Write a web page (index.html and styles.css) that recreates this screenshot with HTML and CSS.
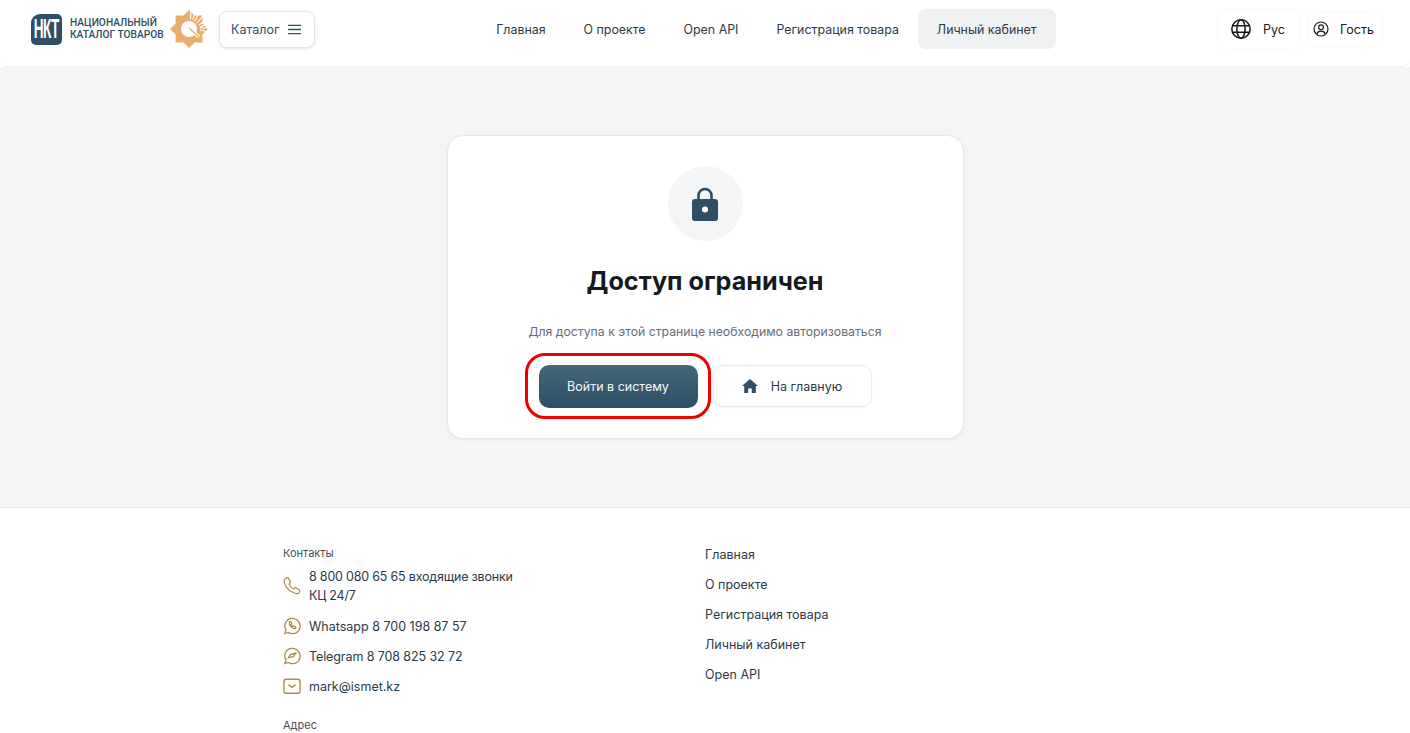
FILE: index.html
```html
<!DOCTYPE html>
<html lang="ru">
<head>
    <meta charset="UTF-8">
    <meta name="viewport" content="width=device-width, initial-scale=1.0">
    <title>Национальный каталог товаров</title>
    <link rel="stylesheet" href="styles.css">
</head>
<body>
    <header class="site-header">
        <div class="header-left">
            <a href="#" class="logo">
                <span class="logo-mark"><span class="logo-letters">НКТ</span></span>
                <span class="logo-text">НАЦИОНАЛЬНЫЙ<br>КАТАЛОГ ТОВАРОВ</span>
                <svg class="logo-star" viewBox="0 0 38 38" width="38" height="38">
                    <path fill="#e8ae6c" d="M18 0l5.500 5.600h7.900v7.900L37 19l-5.600 5.500v7.900h-7.900L18 38l-5.500-5.600H4.600v-7.900L-1 19l5.600-5.500V5.600h7.900z"/>
                    <g stroke="#fff" stroke-width="1.100">
                        <path d="M20 0l-.5 9M24 1l-2 9M28 3l-4 8M32 6l-6 7M35 10l-7 5M37 14l-8 3M38 18h-9M38 22l-9-2"/>
                    </g>
                    <circle cx="18" cy="19" r="8" fill="#fff"/>
                    <path fill="none" stroke="#fff" stroke-width="3.500" d="M19 19l9 8"/>
                    <path fill="none" stroke="#e8ae6c" stroke-width="1.300" d="M18 18l10 9"/>
                </svg>
            </a>
            <button class="catalog-btn">Каталог
                <svg viewBox="0 0 16 12" width="15" height="11"><path fill="none" stroke="#2f4f66" stroke-width="1.500" d="M1 1.500h14M1 6h14M1 10.500h14"/></svg>
            </button>
        </div>
        <nav class="main-nav">
            <a href="#">Главная</a>
            <a href="#">О проекте</a>
            <a href="#">Open API</a>
            <a href="#">Регистрация товара</a>
            <a href="#" class="active">Личный кабинет</a>
        </nav>
        <div class="header-right">
            <a href="#" class="chip chip-lang">
                <svg viewBox="0 0 24 24" width="22" height="22" fill="none" stroke="#1a1a1a" stroke-width="1.700"><circle cx="12" cy="12" r="10"/><ellipse cx="12" cy="12" rx="4.500" ry="10"/><path d="M2.800 8.500h18.400M2.800 15.500h18.400"/></svg>
                Рус
            </a>
            <a href="#" class="chip chip-user">
                <svg viewBox="0 0 24 24" width="16" height="16" fill="none" stroke="#1a1a1a" stroke-width="1.800"><circle cx="12" cy="12" r="10.500"/><circle cx="12" cy="9.500" r="3.600"/><path d="M5.500 19.500c1.200-3.200 3.600-4.400 6.500-4.400s5.300 1.200 6.500 4.400"/></svg>
                Гость
            </a>
        </div>
    </header>

    <main class="page-main">
        <section class="access-card">
            <div class="lock-circle">
                <svg viewBox="0 0 26 34" width="26" height="34">
                    <path fill="none" stroke="#2f4f66" stroke-width="2.600" d="M6.500 14V8.500a6.500 6.500 0 0 1 13 0V14"/>
                    <rect x="0" y="12" width="26" height="22" rx="3" fill="#2f4f66"/>
                    <circle cx="13" cy="22.500" r="3" fill="#fff"/>
                </svg>
            </div>
            <h1>Доступ ограничен</h1>
            <p>Для доступа к этой странице необходимо авторизоваться</p>
            <div class="card-actions">
                <a href="#" class="btn btn-primary">Войти в систему<span class="highlight-ring"></span></a>
                <a href="#" class="btn btn-outline">
                    <svg viewBox="0 0 16 14" width="16" height="14"><path fill="#2f4f66" d="M8 0l8 7h-2.200v7H9.800V9.500H6.200V14H2.200V7H0z"/></svg>
                    На главную
                </a>
            </div>
        </section>
    </main>

    <footer class="site-footer">
        <div class="footer-inner">
            <div class="footer-column contacts-column">
                <h4>Контакты</h4>
                <ul class="contact-list">
                    <li>
                        <svg viewBox="0 0 20 20" width="18" height="18" fill="none" stroke="#b08a45" stroke-width="1.300"><path d="M2.500 1.500l3-.7 3 5-1.800 2c.9 2.400 2.700 4.400 5 5.400l2.100-1.500 5 3-1 3c-1.200 1-3 1-4.500.4C7.500 16 3 11.500 1.500 6.500c-.5-1.900 0-3.900 1-5z"/></svg>
                        <span class="phone-text">8 800 080 65 65 входящие звонки<br>КЦ 24/7</span>
                    </li>
                    <li>
                        <svg viewBox="0 0 20 20" width="18" height="18" fill="none" stroke="#b08a45" stroke-width="1.400"><path d="M2 18.500l1.200-4.200A8.500 8.500 0 1 1 6 17.200z"/><path d="M7 5.500l1.500-.5 1.300 2.300-.8 1c.4 1 1.200 1.900 2.300 2.400l1-.7 2 1.500-.7 1.400c-2.800.8-7.300-3.500-6.600-7.400z"/></svg>
                        <span>Whatsapp 8 700 198 87 57</span>
                    </li>
                    <li>
                        <svg viewBox="0 0 20 20" width="18" height="18" fill="none" stroke="#b08a45" stroke-width="1.400"><path d="M2 18.500l1.200-4.200A8.500 8.500 0 1 1 6 17.200z"/><path d="M6 12l2-3.500 6-1.500-2 3.500z"/></svg>
                        <span class="telegram-text">Telegram 8 708 825 32 72</span>
                    </li>
                    <li>
                        <svg viewBox="0 0 20 20" width="18" height="18" fill="none" stroke="#b08a45" stroke-width="1.500"><rect x="1" y="2.500" width="18" height="15.500" rx="2.500"/><path d="M6 8.500l4 3 4-3"/></svg>
                        <span>mark@ismet.kz</span>
                    </li>
                </ul>
                <h4 class="address-title">Адрес</h4>
            </div>
            <div class="footer-column">
                <ul class="footer-links">
                    <li><a href="#">Главная</a></li>
                    <li><a href="#">О проекте</a></li>
                    <li><a href="#">Регистрация товара</a></li>
                    <li><a href="#">Личный кабинет</a></li>
                    <li><a href="#">Open API</a></li>
                </ul>
            </div>
        </div>
    </footer>
</body>
</html>
```

FILE: styles.css
```css
/* базовые настройки */
* {
    margin: 0;
    padding: 0;
    box-sizing: border-box;
}

html,
body {
    height: 733px;
    overflow: hidden;
}

body {
    font-family: Inter, "Liberation Sans", sans-serif;
    font-size: 13px;
    color: #2b3a46;
    background-color: #fff;
}

a {
    text-decoration: none;
    color: inherit;
}

ul {
    list-style: none;
}

/* шапка */
.site-header {
    height: 67px;
    padding: 0 28px 8px 31px;
    display: flex;
    justify-content: space-between;
    align-items: center;
    background-color: #fff;
    border-bottom: 1px solid #eceef0;
    border-radius: 0 0 8px 8px;
}

.header-left {
    display: flex;
    align-items: center;
    gap: 10px;
}

.logo {
    display: flex;
    align-items: center;
}

.logo-mark {
    width: 31px;
    height: 31px;
    display: flex;
    align-items: center;
    justify-content: center;
    background-color: #2f4f66;
    border-radius: 9px 5px 5px 5px;
    overflow: hidden;
    color: #fff;
}

.logo-letters {
    font-family: "Liberation Sans", sans-serif;
    font-size: 22px;
    font-weight: 700;
    letter-spacing: -1px;
    transform: scale(0.62, 1.25);
}

.logo-text {
    margin-left: 8px;
    font-family: Roboto, sans-serif;
    font-size: 10.200px;
    font-weight: 500;
    line-height: 12px;
    color: #2f4f66;
    white-space: nowrap;
}

.logo-star {
    margin-left: 7px;
    overflow: visible;
}

.catalog-btn {
    width: 96px;
    height: 37px;
    display: flex;
    align-items: center;
    justify-content: center;
    gap: 8px;
    background-color: #fff;
    border: 1px solid #e3e5e8;
    border-radius: 8px;
    box-shadow: 0 1px 3px rgba(0, 0, 0, 0.1);
    font-family: inherit;
    font-size: 12.500px;
    color: #2f4f66;
}

.main-nav {
    display: flex;
    align-items: center;
    font-size: 12.400px;
}

.main-nav a {
    padding: 0 19px;
    height: 40px;
    display: flex;
    align-items: center;
    border-radius: 8px;
    color: #2b3a46;
}

.main-nav a.active {
    background-color: #f0f1f3;
}

.header-right {
    display: flex;
    align-items: center;
    gap: 8px;
}

.chip {
    display: flex;
    align-items: center;
    background-color: #fff;
    border-radius: 8px;
    box-shadow: 0 0 4px rgba(0, 0, 0, 0.04);
    color: #1a1a1a;
    font-size: 12.500px;
}

.chip-lang {
    width: 82px;
    height: 39px;
    padding-left: 12px;
    gap: 11px;
}

.chip-user {
    width: 74px;
    height: 33px;
    padding-left: 5px;
    gap: 11px;
}

/* основной блок */
.page-main {
    height: 440px;
    padding-top: 68px;
    background-color: #f4f5f7;
}

.access-card {
    width: 517px;
    height: 304px;
    margin: 0 auto;
    padding-top: 30px;
    display: flex;
    flex-direction: column;
    align-items: center;
    background-color: #fff;
    border: 1px solid #e6e8eb;
    border-radius: 16px;
    box-shadow: 0 1px 3px rgba(0, 0, 0, 0.06);
}

.lock-circle {
    width: 75px;
    height: 75px;
    display: flex;
    align-items: center;
    justify-content: center;
    background-color: #f3f5f7;
    border-radius: 50%;
}

.access-card h1 {
    margin-top: 24px;
    font-size: 25.200px;
    font-weight: 700;
    line-height: 32px;
    color: #151a1f;
}

.access-card p {
    margin-top: 27px;
    font-size: 12.250px;
    line-height: 16px;
    color: #666d75;
}

.card-actions {
    margin-top: 25px;
    display: flex;
    align-items: flex-start;
    gap: 15px;
}

.btn {
    position: relative;
    height: 43px;
    display: flex;
    align-items: center;
    justify-content: center;
    border-radius: 10px;
    font-size: 12.500px;
    white-space: nowrap;
}

.btn-primary {
    width: 159px;
    background: linear-gradient(#456578, #2f4f66);
    color: #f4f6f8;
}

.btn-outline {
    width: 159px;
    height: 42px;
    gap: 13px;
    background-color: #fff;
    border: 1px solid #eaecee;
    box-shadow: 0 1px 2px rgba(0, 0, 0, 0.05);
    color: #2b3a46;
}

/* красная обводка поверх кнопки */
.highlight-ring {
    position: absolute;
    top: -12px;
    left: -14px;
    right: -13px;
    bottom: -11px;
    border: 3px solid #ee0000;
    border-radius: 20px;
}

/* подвал */
.site-footer {
    height: 226px;
    padding-top: 31px;
    background-color: #fff;
    border-top: 1px solid #e6e8eb;
}

.footer-inner {
    width: 844px;
    margin-left: 283px;
    display: grid;
    grid-template-columns: 1fr 1fr;
}

.contacts-column {
    padding-top: 7px;
}

.footer-column h4 {
    font-size: 11px;
    font-weight: 400;
    line-height: 14px;
    color: #4a4f55;
}

.contact-list {
    margin-top: 7px;
    width: 240px;
}

.contact-list li {
    display: flex;
    align-items: center;
    gap: 8px;
    min-height: 30px;
    font-size: 12.500px;
    line-height: 19px;
    color: #2b3a46;
}

.contact-list li:first-child {
    min-height: 38px;
    margin-bottom: 6px;
}

.phone-text {
    letter-spacing: -0.200px;
}

.telegram-text {
    letter-spacing: -0.100px;
}

.contact-list svg {
    flex-shrink: 0;
}

.address-title {
    margin-top: 17px;
}

.footer-links li {
    height: 30px;
    display: flex;
    align-items: center;
    font-size: 12.500px;
    color: #2b3a46;
}
```
